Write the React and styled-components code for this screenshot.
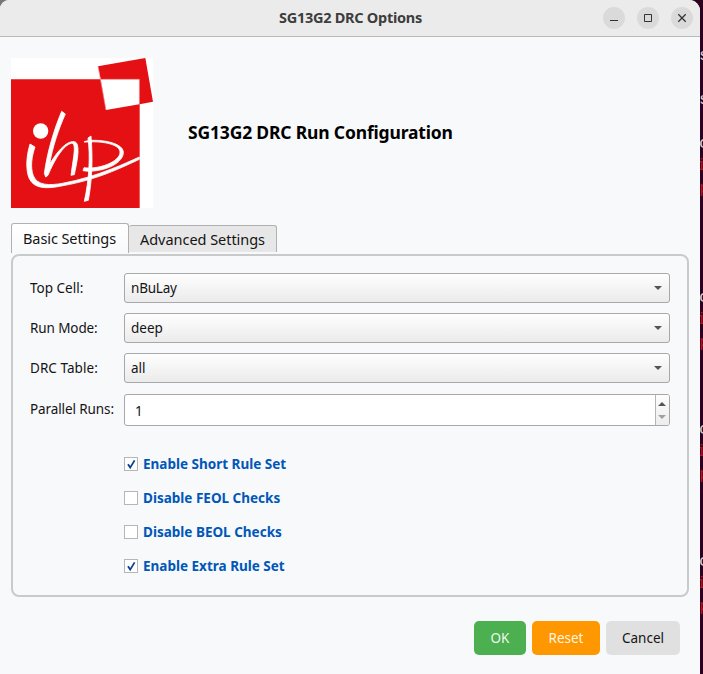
import React from "react";
import styled, { createGlobalStyle } from "styled-components";

const GlobalStyle = createGlobalStyle`
  * { box-sizing: border-box; }
  body {
    margin: 0;
    background: #2c001e;
    font-family: "Noto Sans", "Open Sans", sans-serif;
    font-size: 13.5px;
    color: #141414;
    overflow: hidden;
  }
  button, input { font: inherit; }
`;

const Desktop = styled.div`
  display: grid;
  grid-template-columns: 700px 3px;
  width: 703px;
  height: 674px;
  background: linear-gradient(90deg, #777 0 8px, #2c001e 8px);
`;

const Dialog = styled.main`
  display: flex;
  flex-direction: column;
  background: #f8f9fb;
  border-radius: 9px 11px 0 0;
  overflow: hidden;
`;

const TitleBar = styled.header`
  display: grid;
  grid-template-columns: 1fr auto 1fr;
  align-items: center;
  height: 37px;
  padding-right: 7px;
  background: #ebebeb;
  border-bottom: 1px solid #b9b9b9;
`;

const Title = styled.h1`
  grid-column: 2;
  margin: 0 0 3px 8px;
  font-size: 14.5px;
  line-height: 20px;
  font-weight: 700;
  letter-spacing: -0.27px;
  color: #3d3d3d;
`;

const WindowControls = styled.div`
  display: flex;
  justify-content: flex-end;
  gap: 12px;
`;

const ControlButton = styled.button`
  display: flex;
  width: 22px;
  height: 22px;
  padding: 0;
  border: 0;
  border-radius: 50%;
  background: #dadada;
`;

const Header = styled.section`
  display: flex;
  align-items: center;
  gap: 35px;
  padding: 21px 11px 15px;
`;

const LogoArt = styled.svg`
  display: block;
  width: 142px;
  height: 150px;
  background: #fff;
`;

const Heading = styled.h2`
  margin: 0 0 2px;
  font-size: 17.5px;
  line-height: 24px;
  font-weight: 700;
  letter-spacing: -0.17px;
  color: #000;
`;

const TabList = styled.nav`
  display: flex;
  align-items: flex-end;
  height: 31px;
  padding: 0 11px 1px;
`;

const Tab = styled.button`
  width: ${(p) => (p.$active ? 118 : 148)}px;
  height: ${(p) => (p.$active ? 30 : 27)}px;
  margin-bottom: ${(p) => (p.$active ? 0 : 1)}px;
  padding: ${(p) => (p.$active ? "0 1px 2px 0" : "0")};
  border: 1px solid #b0b0b0;
  border-left-width: ${(p) => (p.$active ? 1 : 0)}px;
  border-bottom: 0;
  border-radius: 3px 3px 0 0;
  background: ${(p) => (p.$active ? "linear-gradient(#fff, #f8f9fb)" : "#e7e7e7")};
  color: #141414;
  font-size: 14.5px;
  line-height: 20px;
  letter-spacing: ${(p) => (p.$active ? -0.08 : -0.04)}px;
`;

const Panel = styled.form`
  display: flex;
  flex-direction: column;
  height: 343px;
  margin: 0 11px;
  padding: 17px 17px 0;
  border: 2px solid #c8cacb;
  border-radius: 8px;
`;

const Fields = styled.div`
  display: grid;
  grid-template-columns: 94px 1fr;
  grid-template-rows: 30px 30px 30px 32px;
  row-gap: 10px;
  align-items: center;
`;

const Label = styled.label`
  padding-bottom: 1px;
  line-height: 20px;
  letter-spacing: ${(p) => p.$spacing || 0}px;
`;

const Combo = styled.button`
  display: flex;
  align-items: center;
  justify-content: space-between;
  width: 100%;
  height: 30px;
  padding: 0 7px 1px 6px;
  border: 1px solid #a8a8a8;
  border-radius: 3px;
  background: linear-gradient(#fefefe, #ebebeb);
  color: #141414;
  letter-spacing: ${(p) => p.$spacing || 0}px;
`;

const Caret = styled.svg`
  display: block;
  width: 8px;
  height: 4px;
  fill: ${(p) => (p.$dim ? "#a0a0a0" : "#555")};
`;

const SpinBox = styled.div`
  display: grid;
  grid-template-columns: 1fr 14px;
  height: 32px;
  margin-top: 2px;
  border: 1px solid #a8a8a8;
  border-radius: 3px;
  background: #fff;
  overflow: hidden;
`;

const SpinValue = styled.span`
  padding: 6px 0 0 10px;
  line-height: 20px;
`;

const SpinButtons = styled.div`
  display: flex;
  flex-direction: column;
  align-items: center;
  justify-content: space-between;
  padding: 7px 1px 6px 0;
  border-left: 1px solid #b5b5b5;
  background: linear-gradient(#fdfdfd, #ededed);
`;

const Checks = styled.div`
  display: flex;
  flex-direction: column;
  gap: 14px;
  padding: 29px 0 0 94px;
`;

const CheckRow = styled.label`
  display: flex;
  align-items: center;
  gap: 5px;
  height: 20px;
  font-weight: 700;
  line-height: 20px;
  color: #0057b8;
`;

const CheckBox = styled.svg`
  display: block;
  width: 14px;
  height: 14px;
  margin-bottom: 1px;
  border: 1px solid #b6b6b6;
  background: #fff;
  fill: none;
  stroke: #0b3f91;
  stroke-width: 1.8;
`;

const Actions = styled.footer`
  display: flex;
  justify-content: flex-end;
  gap: 6px;
  padding: 24px 20px 0;
`;

const ActionButton = styled.button`
  width: ${(p) => p.$width}px;
  height: 34px;
  padding: 0 0 1px;
  border: 0;
  border-radius: 5px;
  background: ${(p) => p.$color};
  color: ${(p) => (p.$dark ? "#141414" : "rgba(255, 255, 255, 0.93)")};
`;

const Terminal = styled.aside`
  display: flex;
  flex-direction: column;
  width: 3px;
  padding-top: 51px;
  background: #2c001e;
  overflow: hidden;
  font-family: "Liberation Mono", monospace;
  font-size: 17px;
`;

const TerminalGlyph = styled.span`
  height: ${(p) => p.$advance}px;
  flex: none;
  margin-left: ${(p) => (p.$shift ? -4 : -1)}px;
  line-height: 10px;
  color: ${(p) => (p.$error ? "#b3131d" : "#d8d0d5")};
`;

const terminalGlyphs = [
  ["s", 44], ["s", 44], ["c", 22], ["i", 23, true], ["p", 109, true],
  ["c", 22], ["i", 23, true], ["p", 87, true],
  ["c", 22], ["i", 23, true], ["p", 87, true],
  ["c", 22], ["i", 23, true], ["p", 40, true],
];

const combos = [
  { label: "Top Cell:", value: "nBuLay", valueSpacing: -0.2 },
  { label: "Run Mode:", value: "deep", labelSpacing: -0.1 },
  { label: "DRC Table:", value: "all", labelSpacing: 0.05 },
];

const checks = [
  ["Enable Short Rule Set", true],
  ["Disable FEOL Checks", false],
  ["Disable BEOL Checks", false],
  ["Enable Extra Rule Set", true],
];

function Logo() {
  return (
    <LogoArt viewBox="0 0 426 450" role="img" aria-label="Institute logo">
      <path d="M0 64H269L261 25 403 0 426 131 386 139V450H0Z" fill="#e41013" />
      <path d="M269 64H385V139L285 156Z" fill="#fff" />
      <path d="M261 25 285 156 M269 64H385V139" stroke="#ef9697" strokeWidth="2" fill="none" />
      <circle cx="89" cy="219" r="23" fill="#fff" />
      <g fill="#fff" stroke="#fff" strokeWidth="2.5" strokeLinejoin="round">
        <path d="M57 258C45 297 44 338 55 362C70 393 108 393 151 384C220 372 275 353 319 334C347 322 368 312 385 304V297C362 307 333 321 301 333C253 352 205 366 159 375C113 384 79 382 67 353C57 327 63 293 72 267Z" />
        <path d="M152 160C128 217 109 282 100 346L104 357 111 352C131 304 157 262 181 256C197 255 188 292 180 352L190 350C197 316 205 281 199 260C195 246 178 249 162 261C145 274 130 295 116 318C124 270 142 215 163 168Z" />
        <path d="M231 240C238 294 235 362 220 430L232 427C243 367 246 306 240 234Z" />
        <path d="M229 252 219 252C232 241 341 246 337 286C333 321 267 346 216 338L219 329C266 335 324 311 327 285C330 259 276 249 229 252Z" />
      </g>
    </LogoArt>
  );
}

export default function App() {
  return (
    <>
      <GlobalStyle />
      <Desktop>
        <Dialog>
          <TitleBar>
            <Title>SG13G2 DRC Options</Title>
            <WindowControls>
              <ControlButton aria-label="Minimize">
                <svg width="22" height="22"><path d="M7 13.5H15" stroke="#333" /></svg>
              </ControlButton>
              <ControlButton aria-label="Maximize">
                <svg width="22" height="22"><path d="M7.5 7.5H14.5V14.5H7.5Z" fill="none" stroke="#333" /></svg>
              </ControlButton>
              <ControlButton aria-label="Close">
                <svg width="22" height="22"><path d="M7.3 7.3 14.7 14.7M14.7 7.3 7.3 14.7" stroke="#333" strokeWidth="1.3" /></svg>
              </ControlButton>
            </WindowControls>
          </TitleBar>
          <Header>
            <Logo />
            <Heading>SG13G2 DRC Run Configuration</Heading>
          </Header>
          <TabList>
            <Tab $active>Basic Settings</Tab>
            <Tab>Advanced Settings</Tab>
          </TabList>
          <Panel>
            <Fields>
              {combos.map((c) => (
                <React.Fragment key={c.label}>
                  <Label $spacing={c.labelSpacing}>{c.label}</Label>
                  <Combo type="button" $spacing={c.valueSpacing}>
                    {c.value}
                    <Caret viewBox="0 0 8 4"><path d="M0 0H8L4 4Z" /></Caret>
                  </Combo>
                </React.Fragment>
              ))}
              <Label $spacing={-0.1}>Parallel Runs:</Label>
              <SpinBox>
                <SpinValue>1</SpinValue>
                <SpinButtons>
                  <Caret viewBox="0 0 8 4"><path d="M0 4H8L4 0Z" /></Caret>
                  <Caret $dim viewBox="0 0 8 4"><path d="M0 0H8L4 4Z" /></Caret>
                </SpinButtons>
              </SpinBox>
            </Fields>
            <Checks>
              {checks.map(([text, on]) => (
                <CheckRow key={text}>
                  <CheckBox viewBox="0 0 12 12">{on && <path d="M3 6.2 5.2 9.6 9.6 2.4" />}</CheckBox>
                  {text}
                </CheckRow>
              ))}
            </Checks>
          </Panel>
          <Actions>
            <ActionButton $width={52} $color="#4caf50">OK</ActionButton>
            <ActionButton $width={68} $color="#ff9800">Reset</ActionButton>
            <ActionButton $width={74} $color="#e0e0e0" $dark>Cancel</ActionButton>
          </Actions>
        </Dialog>
        <Terminal>
          {terminalGlyphs.map(([glyph, advance, error], i) => (
            <TerminalGlyph key={i} $advance={advance} $error={error} $shift={glyph === "i"}>{glyph}</TerminalGlyph>
          ))}
        </Terminal>
      </Desktop>
    </>
  );
}
